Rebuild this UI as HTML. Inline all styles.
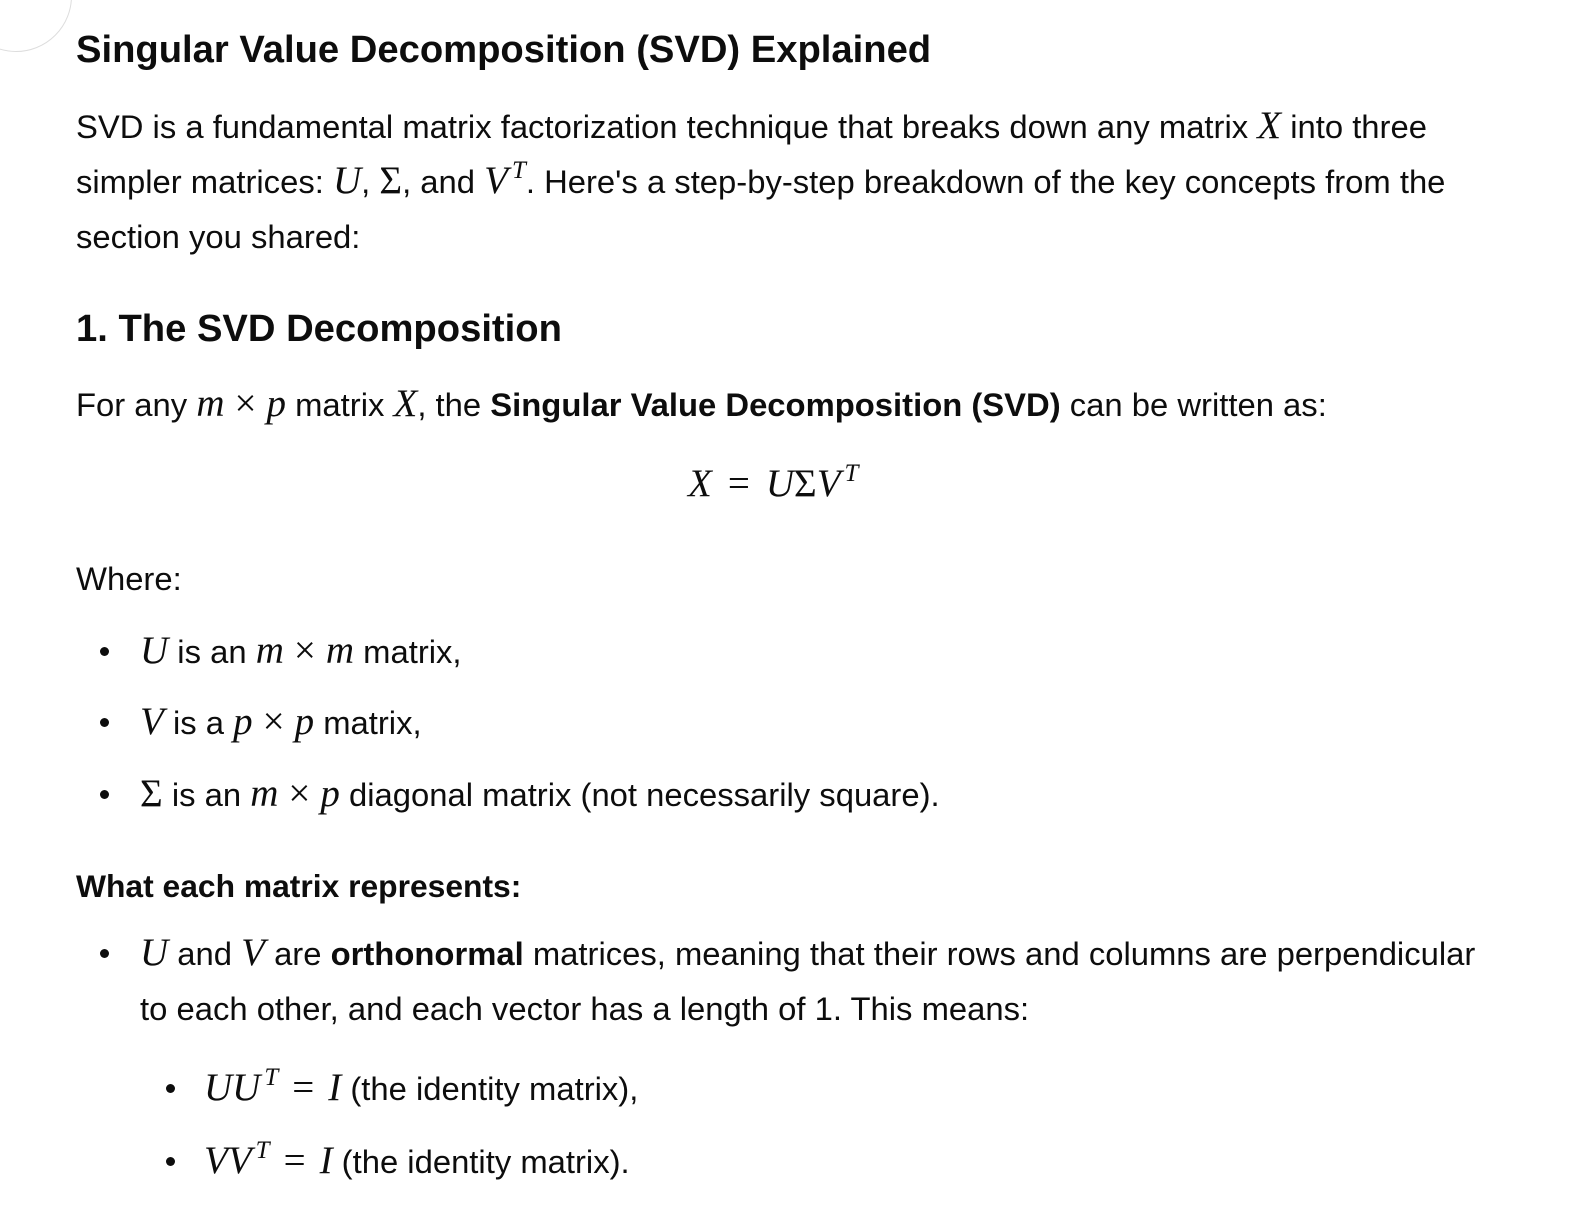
<!DOCTYPE html>
<html><head><meta charset="utf-8"><style>
html,body{margin:0;padding:0;background:#fff;}
body{width:1574px;height:1206px;position:relative;overflow:hidden;font-family:"Liberation Sans",sans-serif;color:#0d0d0d;}
.l{position:absolute;left:76px;height:40px;line-height:40px;font-size:32.8px;white-space:nowrap;top:0;}
.m{font-family:"Liberation Serif",serif;font-style:italic;font-size:39px;}
.r{font-family:"Liberation Serif",serif;font-size:39px;}
.op{font-family:"Liberation Serif",serif;font-size:39px;margin:0 10px;}
sup{font-size:25px;vertical-align:15px;line-height:0;margin-left:4px;}
.t{font-weight:bold;font-size:38.2px;}
.dot{position:absolute;width:9px;height:9px;border-radius:50%;background:#0d0d0d;}
b{font-weight:bold;}
.bb{font-size:31.8px;}
</style></head><body>
<div style="position:absolute;left:-40px;top:-60px;width:110px;height:110px;border:1px solid #ddd;border-radius:50%;"></div>
<div class="l t" style="top:30px;">Singular Value Decomposition (SVD) Explained</div>
<div class="l" style="top:106px;">SVD is a fundamental matrix factorization technique that breaks down any matrix <span class="m">X</span> into three</div>
<div class="l" style="top:161px;">simpler matrices: <span class="m">U</span>, <span class="r">Σ</span>, and <span class="m">V<sup>T</sup></span>. Here's a step-by-step breakdown of the key concepts from the</div>
<div class="l" style="top:217px;">section you shared:</div>
<div class="l t" style="top:309px;">1. The SVD Decomposition</div>
<div class="l" style="top:384px;">For any <span class="m">m</span><span class="op">×</span><span class="m">p</span> matrix <span class="m">X</span>, the <b>Singular Value Decomposition (SVD)</b> can be written as:</div>
<div class="l" style="top:464px;left:688px;"><span class="m">X</span><span class="op" style="margin:0 16px">=</span><span class="m">U</span><span class="r">Σ</span><span class="m">V<sup>T</sup></span></div>
<div class="l" style="top:559px;">Where:</div>
<div class="dot" style="left:100px;top:647px;"></div>
<div class="l" style="top:631px;left:140px;"><span class="m">U</span> is an <span class="m">m</span><span class="op">×</span><span class="m">m</span> matrix,</div>
<div class="dot" style="left:100px;top:718px;"></div>
<div class="l" style="top:702px;left:140px;"><span class="m">V</span> is a <span class="m">p</span><span class="op">×</span><span class="m">p</span> matrix,</div>
<div class="dot" style="left:100px;top:790px;"></div>
<div class="l" style="top:774px;left:140px;"><span class="r">Σ</span> is an <span class="m">m</span><span class="op">×</span><span class="m">p</span> diagonal matrix (not necessarily square).</div>
<div class="l bb" style="top:866px;"><b>What each matrix represents:</b></div>
<div class="dot" style="left:100px;top:949px;"></div>
<div class="l" style="top:933px;left:140px;"><span class="m">U</span> and <span class="m">V</span> are <b>orthonormal</b> matrices, meaning that their rows and columns are perpendicular</div>
<div class="l" style="top:989px;left:140px;">to each other, and each vector has a length of 1. This means:</div>
<div class="dot" style="left:166px;top:1084px;"></div>
<div class="l" style="top:1068px;left:204px;"><span class="m">UU<sup>T</sup></span><span class="op" style="margin:0 14px">=</span><span class="m">I</span> (the identity matrix),</div>
<div class="dot" style="left:166px;top:1157px;"></div>
<div class="l" style="top:1141px;left:204px;"><span class="m">VV<sup>T</sup></span><span class="op" style="margin:0 14px">=</span><span class="m">I</span> (the identity matrix).</div>
</body></html>
